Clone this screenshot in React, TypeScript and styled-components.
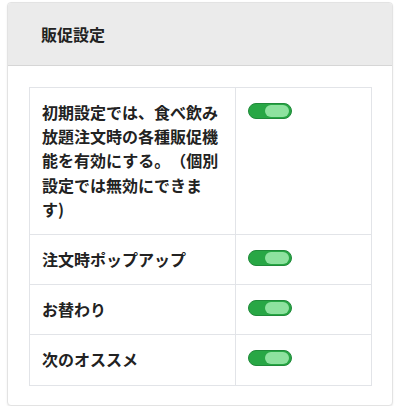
import React from "react";
import styled, { createGlobalStyle } from "styled-components";

const Global = createGlobalStyle`
  html, body { margin: 0; padding: 0; background: #fff; }
  body {
    font-family: "Noto Sans CJK JP", "Noto Sans", sans-serif;
    color: #212529;
    text-spacing-trim: space-all;
  }
`;

const Page = styled.div`
  padding: 2px 7px 0 7px;
`;

const Card = styled.div`
  border: 1px solid #e3e3e3;
  border-radius: 4px;
  box-shadow: 0 1px 2px rgba(0, 0, 0, 0.08);
  background: #fff;
  overflow: hidden;
`;

const CardHeader = styled.div`
  height: 62px;
  display: flex;
  align-items: center;
  padding: 0 33px;
  background: #ebebeb;
  border-bottom: 1px solid #d6d6d6;
  font-size: 16px;
  font-weight: 700;
  color: #222;
`;

const CardBody = styled.div`
  padding: 21px 20px 19px 21px;
`;

const Table = styled.table`
  width: 100%;
  border-collapse: collapse;
  table-layout: fixed;
`;

const Row = styled.tr``;

const LabelCell = styled.td`
  width: 181px;
  padding: 12px 12px 13px 12px;
  border: 1px solid #e2e4e8;
  font-size: 16px;
  line-height: 24.2px;
  font-weight: 700;
  color: #222;
  vertical-align: top;
  text-spacing-trim: space-all;
`;

const ToggleCell = styled.td`
  padding: 12px 12px 13px 12px;
  border: 1px solid #e2e4e8;
  vertical-align: top;
`;

const Toggle = styled.span<{ $on: boolean }>`
  display: block;
  margin-top: 3px;
  width: 44px;
  height: 16px;
  box-sizing: border-box;
  border-radius: 8px;
  background: ${(p) => (p.$on ? "#28a745" : "#ccc")};
  border: 1px solid ${(p) => (p.$on ? "#208a3a" : "#aaa")};
  position: relative;
`;

const Knob = styled.span<{ $on: boolean }>`
  position: absolute;
  top: 1px;
  ${(p) => (p.$on ? "right: 2px;" : "left: 2px;")}
  width: 24px;
  height: 12px;
  border-radius: 6px;
  background: #8ee29f;
`;

const rows = [
  "初期設定では、食べ飲み放題注文時の各種販促機能を有効にする。（個別設定では無効にできます)",
  "注文時ポップアップ",
  "お替わり",
  "次のオススメ",
];

export default function App() {
  return (
    <>
      <Global />
      <Page>
        <Card>
          <CardHeader>販促設定</CardHeader>
          <CardBody>
            <Table>
              <tbody>
                {rows.map((r) => (
                  <Row key={r}>
                    <LabelCell>{r}</LabelCell>
                    <ToggleCell>
                      <Toggle $on>
                        <Knob $on />
                      </Toggle>
                    </ToggleCell>
                  </Row>
                ))}
              </tbody>
            </Table>
          </CardBody>
        </Card>
      </Page>
    </>
  );
}
